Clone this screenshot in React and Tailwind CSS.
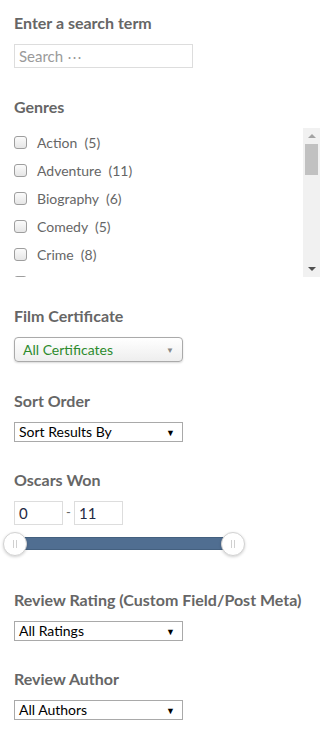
import React from "react";

const genres = [
  { name: "Action", count: 5 },
  { name: "Adventure", count: 11 },
  { name: "Biography", count: 6 },
  { name: "Comedy", count: 5 },
  { name: "Crime", count: 8 },
  { name: "Drama", count: 25 },
];

const Heading = ({ children }) => (
  <h3 className="text-[16px] leading-[20px] font-bold text-[#666666] mb-[11px]">
    {children}
  </h3>
);

const PlainSelect = ({ label }) => (
  <div className="w-[169px] h-[20px] border border-[#a9a9a9] bg-white flex items-center justify-between pl-[4px] pr-[7px]">
    <span className="text-[14px] leading-none text-black">{label}</span>
    <span className="text-[9px] leading-none text-black">▼</span>
  </div>
);

const Handle = () => (
  <div className="w-[24px] h-[24px] rounded-full bg-white border border-[#d3d3d3] shadow-[0_1px_3px_rgba(0,0,0,0.18)] flex items-center justify-center gap-[2px] shrink-0">
    <span className="w-px h-[8px] bg-[#d0d0d0]" />
    <span className="w-px h-[8px] bg-[#d0d0d0]" />
  </div>
);

const App = () => {
  return (
    <div
      className="w-[334px] min-h-[738px] bg-white pl-[14px] pt-[13px]"
      style={{ fontFamily: "Lato, 'Open Sans', sans-serif" }}
    >
      <section className="mb-[29px]">
        <Heading>Enter a search term</Heading>
        <div className="w-[179px] h-[24px] border border-[#dddddd] flex items-center px-[4px]">
          <span className="text-[15px] leading-none text-[#9a9a9a]">Search ⋯</span>
        </div>
      </section>

      <section className="mb-[29px]">
        <Heading>Genres</Heading>
        <div className="flex w-[306px] h-[149px]">
          <ul className="flex-1 overflow-hidden">
            {genres.map((g) => (
              <li key={g.name} className="h-[28px] flex items-center">
                <span className="w-[13px] h-[13px] rounded-[3px] border border-[#9e9e9e] bg-gradient-to-b from-[#fbfbfb] to-[#e6e6e6] mr-[10px] shrink-0" />
                <span className="text-[14px] text-[#666666]">
                  {g.name}&nbsp; ({g.count})
                </span>
              </li>
            ))}
          </ul>
          <div className="w-[17px] h-full bg-[#f1f1f1] flex flex-col items-center">
            <div className="h-[16px] flex items-center justify-center">
              <span className="w-0 h-0 border-l-[4px] border-r-[4px] border-b-[4px] border-l-transparent border-r-transparent border-b-[#a3a3a3]" />
            </div>
            <div className="w-[13px] h-[31px] bg-[#c1c1c1]" />
            <div className="flex-1" />
            <div className="h-[16px] flex items-center justify-center">
              <span className="w-0 h-0 border-l-[4px] border-r-[4px] border-t-[4px] border-l-transparent border-r-transparent border-t-[#505050]" />
            </div>
          </div>
        </div>
      </section>

      <section className="mb-[29px]">
        <Heading>Film Certificate</Heading>
        <div className="w-[169px] h-[25px] rounded-[4px] border border-[#aaaaaa] bg-gradient-to-b from-white to-[#eeeeee] shadow-[0_1px_2px_rgba(0,0,0,0.15)] flex items-center justify-between pl-[8px] pr-[8px]">
          <span className="text-[14px] leading-none text-[#2d8b2d]">All Certificates</span>
          <span className="text-[8px] leading-none text-[#888888]">▼</span>
        </div>
      </section>

      <section className="mb-[28px]">
        <Heading>Sort Order</Heading>
        <PlainSelect label="Sort Results By" />
      </section>

      <section className="mb-[34px]">
        <Heading>Oscars Won</Heading>
        <div className="flex items-center">
          <div className="w-[49px] h-[24px] border border-[#dddddd] flex items-center px-[4px]">
            <span className="text-[15px] leading-none text-[#1f2a44]">0</span>
          </div>
          <span className="w-[11px] text-center text-[13px] text-[#666666]">-</span>
          <div className="w-[49px] h-[24px] border border-[#dddddd] flex items-center px-[4px]">
            <span className="text-[15px] leading-none text-[#1f2a44]">11</span>
          </div>
        </div>
        <div className="relative w-[242px] h-[24px] mt-[7px] -ml-[11px]">
          <div className="absolute left-[12px] right-[12px] top-[5px] h-[13px] bg-[#506e91] border-y border-[#44607f]" />
          <div className="absolute left-0 top-0">
            <Handle />
          </div>
          <div className="absolute right-0 top-0">
            <Handle />
          </div>
        </div>
      </section>

      <section className="mb-[28px]">
        <Heading>Review Rating (Custom Field/Post Meta)</Heading>
        <PlainSelect label="All Ratings" />
      </section>

      <section>
        <Heading>Review Author</Heading>
        <PlainSelect label="All Authors" />
      </section>
    </div>
  );
};

export default App;
